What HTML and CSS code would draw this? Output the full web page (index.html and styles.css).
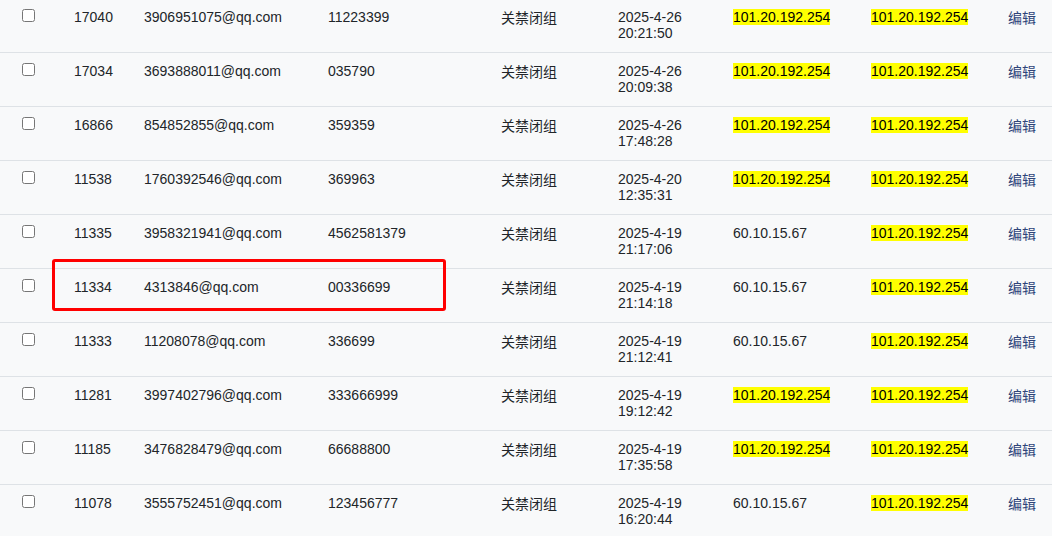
FILE: index.html
```html
<!DOCTYPE html>
<html lang="zh-CN">
<head>
<meta charset="utf-8">
<title>用户列表</title>
<link rel="stylesheet" href="styles.css">
</head>
<body>
<div class="wrap">
<table class="list">
<colgroup>
<col class="c-chk"><col class="c-id"><col class="c-mail"><col class="c-pw"><col class="c-st"><col class="c-dt"><col class="c-ip1"><col class="c-ip2"><col class="c-op">
</colgroup>
<tbody>
<tr><td class="chk"><input type="checkbox"></td><td>17040</td><td>3906951075@qq.com</td><td>11223399</td><td class="st">关禁闭组</td><td>2025-4-26<br>20:21:50</td><td><span class="hl">101.20.192.254</span></td><td><span class="hl">101.20.192.254</span></td><td class="op"><a href="#">编辑</a></td></tr>
<tr><td class="chk"><input type="checkbox"></td><td>17034</td><td>3693888011@qq.com</td><td>035790</td><td class="st">关禁闭组</td><td>2025-4-26<br>20:09:38</td><td><span class="hl">101.20.192.254</span></td><td><span class="hl">101.20.192.254</span></td><td class="op"><a href="#">编辑</a></td></tr>
<tr><td class="chk"><input type="checkbox"></td><td>16866</td><td>854852855@qq.com</td><td>359359</td><td class="st">关禁闭组</td><td>2025-4-26<br>17:48:28</td><td><span class="hl">101.20.192.254</span></td><td><span class="hl">101.20.192.254</span></td><td class="op"><a href="#">编辑</a></td></tr>
<tr><td class="chk"><input type="checkbox"></td><td>11538</td><td>1760392546@qq.com</td><td>369963</td><td class="st">关禁闭组</td><td>2025-4-20<br>12:35:31</td><td><span class="hl">101.20.192.254</span></td><td><span class="hl">101.20.192.254</span></td><td class="op"><a href="#">编辑</a></td></tr>
<tr><td class="chk"><input type="checkbox"></td><td>11335</td><td>3958321941@qq.com</td><td>4562581379</td><td class="st">关禁闭组</td><td>2025-4-19<br>21:17:06</td><td>60.10.15.67</td><td><span class="hl">101.20.192.254</span></td><td class="op"><a href="#">编辑</a></td></tr>
<tr><td class="chk"><input type="checkbox"></td><td>11334</td><td>4313846@qq.com</td><td>00336699</td><td class="st">关禁闭组</td><td>2025-4-19<br>21:14:18</td><td>60.10.15.67</td><td><span class="hl">101.20.192.254</span></td><td class="op"><a href="#">编辑</a></td></tr>
<tr><td class="chk"><input type="checkbox"></td><td>11333</td><td>11208078@qq.com</td><td>336699</td><td class="st">关禁闭组</td><td>2025-4-19<br>21:12:41</td><td>60.10.15.67</td><td><span class="hl">101.20.192.254</span></td><td class="op"><a href="#">编辑</a></td></tr>
<tr><td class="chk"><input type="checkbox"></td><td>11281</td><td>3997402796@qq.com</td><td>333666999</td><td class="st">关禁闭组</td><td>2025-4-19<br>19:12:42</td><td><span class="hl">101.20.192.254</span></td><td><span class="hl">101.20.192.254</span></td><td class="op"><a href="#">编辑</a></td></tr>
<tr><td class="chk"><input type="checkbox"></td><td>11185</td><td>3476828479@qq.com</td><td>66688800</td><td class="st">关禁闭组</td><td>2025-4-19<br>17:35:58</td><td><span class="hl">101.20.192.254</span></td><td><span class="hl">101.20.192.254</span></td><td class="op"><a href="#">编辑</a></td></tr>
<tr><td class="chk"><input type="checkbox"></td><td>11078</td><td>3555752451@qq.com</td><td>123456777</td><td class="st">关禁闭组</td><td>2025-4-19<br>16:20:44</td><td>60.10.15.67</td><td><span class="hl">101.20.192.254</span></td><td class="op"><a href="#">编辑</a></td></tr>
</tbody>
</table>
<div class="mark"></div>
</div>
</body>
</html>
```

FILE: styles.css
```css
html, body {
  margin: 0;
  padding: 0;
  background: #f8f9fa;
}
body {
  font-family: "Liberation Sans", Arial, "Noto Sans CJK SC", sans-serif;
  font-size: 14px;
  color: #212529;
  overflow: hidden;
}
.wrap {
  position: relative;
  margin-top: -1px;
  width: 1052px;
}
.list {
  width: 1052px;
  table-layout: fixed;
  border-collapse: collapse;
}
.c-chk { width: 62px; }
.c-id { width: 70px; }
.c-mail { width: 184px; }
.c-pw { width: 173px; }
.c-st { width: 117px; }
.c-dt { width: 115px; }
.c-ip1 { width: 138px; }
.c-ip2 { width: 137px; }
.c-op { width: 56px; }
.list td {
  padding: 10px 12px 11px 12px;
  line-height: 16px;
  height: 32px;
  vertical-align: top;
  text-align: left;
  border-bottom: 1px solid #dee2e6;
  white-space: nowrap;
}
.list td.chk {
  padding-left: 22px;
}
.list td.chk input {
  display: block;
  width: 13px;
  height: 13px;
  margin: 0;
}
.list td.st,
.list td.op {
  padding-top: 11px;
  padding-bottom: 10px;
}
.hl {
  background: #ffff00;
  color: #000;
}
.op a {
  color: #2e4479;
  text-decoration: none;
}
.mark {
  position: absolute;
  left: 52px;
  top: 260px;
  width: 394px;
  height: 52px;
  box-sizing: border-box;
  border: 3px solid #ff0000;
  border-radius: 3px;
}
```
